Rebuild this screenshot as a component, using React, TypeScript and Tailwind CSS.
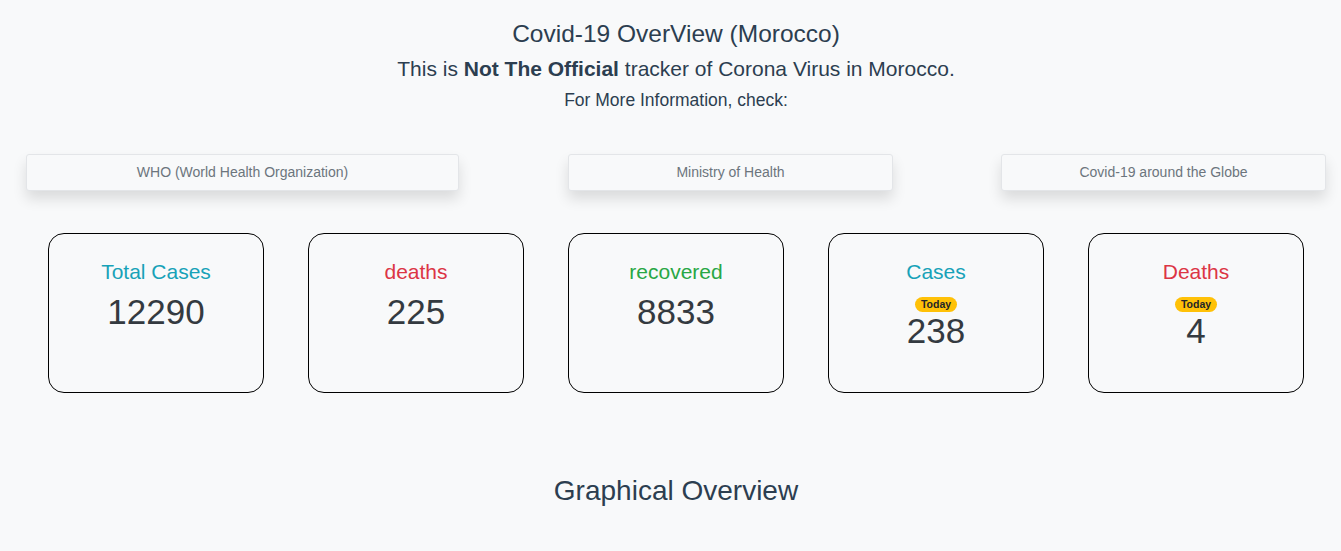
import React from "react";

const font = { fontFamily: '"Liberation Sans", Arial, sans-serif' };

function LinkBox({ label, w, ml }: { label: string; w: string; ml: string }) {
  return (
    <div
      className={`${w} ${ml} h-[37px] flex items-center justify-center rounded-[3px] border border-[#e3e5e8] bg-[#f8f9fa] text-[14px] leading-[16px] pb-[1px] text-[#6c757d] shadow-[0_8px_14px_rgba(0,0,0,0.12)]`}
    >
      {label}
    </div>
  );
}

function Card({ title, color, value, today }: { title: string; color: string; value: string; today?: boolean }) {
  return (
    <div className="w-[216px] h-[160px] rounded-[16px] border border-black flex flex-col items-center pt-[26px]">
      <div className={`text-[21px] leading-[24px] ${color}`}>{title}</div>
      {today ? (
        <>
          <div className="mt-[13px] h-[15px] px-[6px] rounded-full bg-[#ffc107] text-[#212529] text-[10.5px] font-bold leading-[15px]">
            Today
          </div>
          <div className="text-[35px] leading-[40px] text-[#343a40] mt-[-1px]">{value}</div>
        </>
      ) : (
        <div className="text-[35px] leading-[42px] text-[#343a40] mt-[7px]">{value}</div>
      )}
    </div>
  );
}

export default function App() {
  return (
    <div className="w-[1341px] h-[551px] bg-[#f8f9fa] overflow-hidden" style={font}>
      <div className="flex flex-col items-center text-[#2c3e50] pt-[19px] pl-[11px]">
        <div className="text-[24.5px] leading-[29px]">Covid-19 OverView (Morocco)</div>
        <div className="text-[21px] leading-[24px] mt-[9px]">
          This is <b>Not The Official</b> tracker of Corona Virus in Morocco.
        </div>
        <div className="text-[17.5px] leading-[20px] mt-[9px]">For More Information, check:</div>
      </div>
      <div className="flex pl-[26px] mt-[44px]">
        <LinkBox label="WHO (World Health Organization)" w="w-[433px]" ml="ml-0" />
        <LinkBox label="Ministry of Health" w="w-[325px]" ml="ml-[109px]" />
        <LinkBox label="Covid-19 around the Globe" w="w-[325px]" ml="ml-[108px]" />
      </div>
      <div className="flex pl-[48px] gap-[44px] mt-[42px]">
        <Card title="Total Cases" color="text-[#17a2b8]" value="12290" />
        <Card title="deaths" color="text-[#dc3545]" value="225" />
        <Card title="recovered" color="text-[#28a745]" value="8833" />
        <Card title="Cases" color="text-[#17a2b8]" value="238" today />
        <Card title="Deaths" color="text-[#dc3545]" value="4" today />
      </div>
      <div className="flex justify-center mt-[81px] pl-[11px] text-[28px] leading-[34px] text-[#2c3e50]">
        Graphical Overview
      </div>
    </div>
  );
}
